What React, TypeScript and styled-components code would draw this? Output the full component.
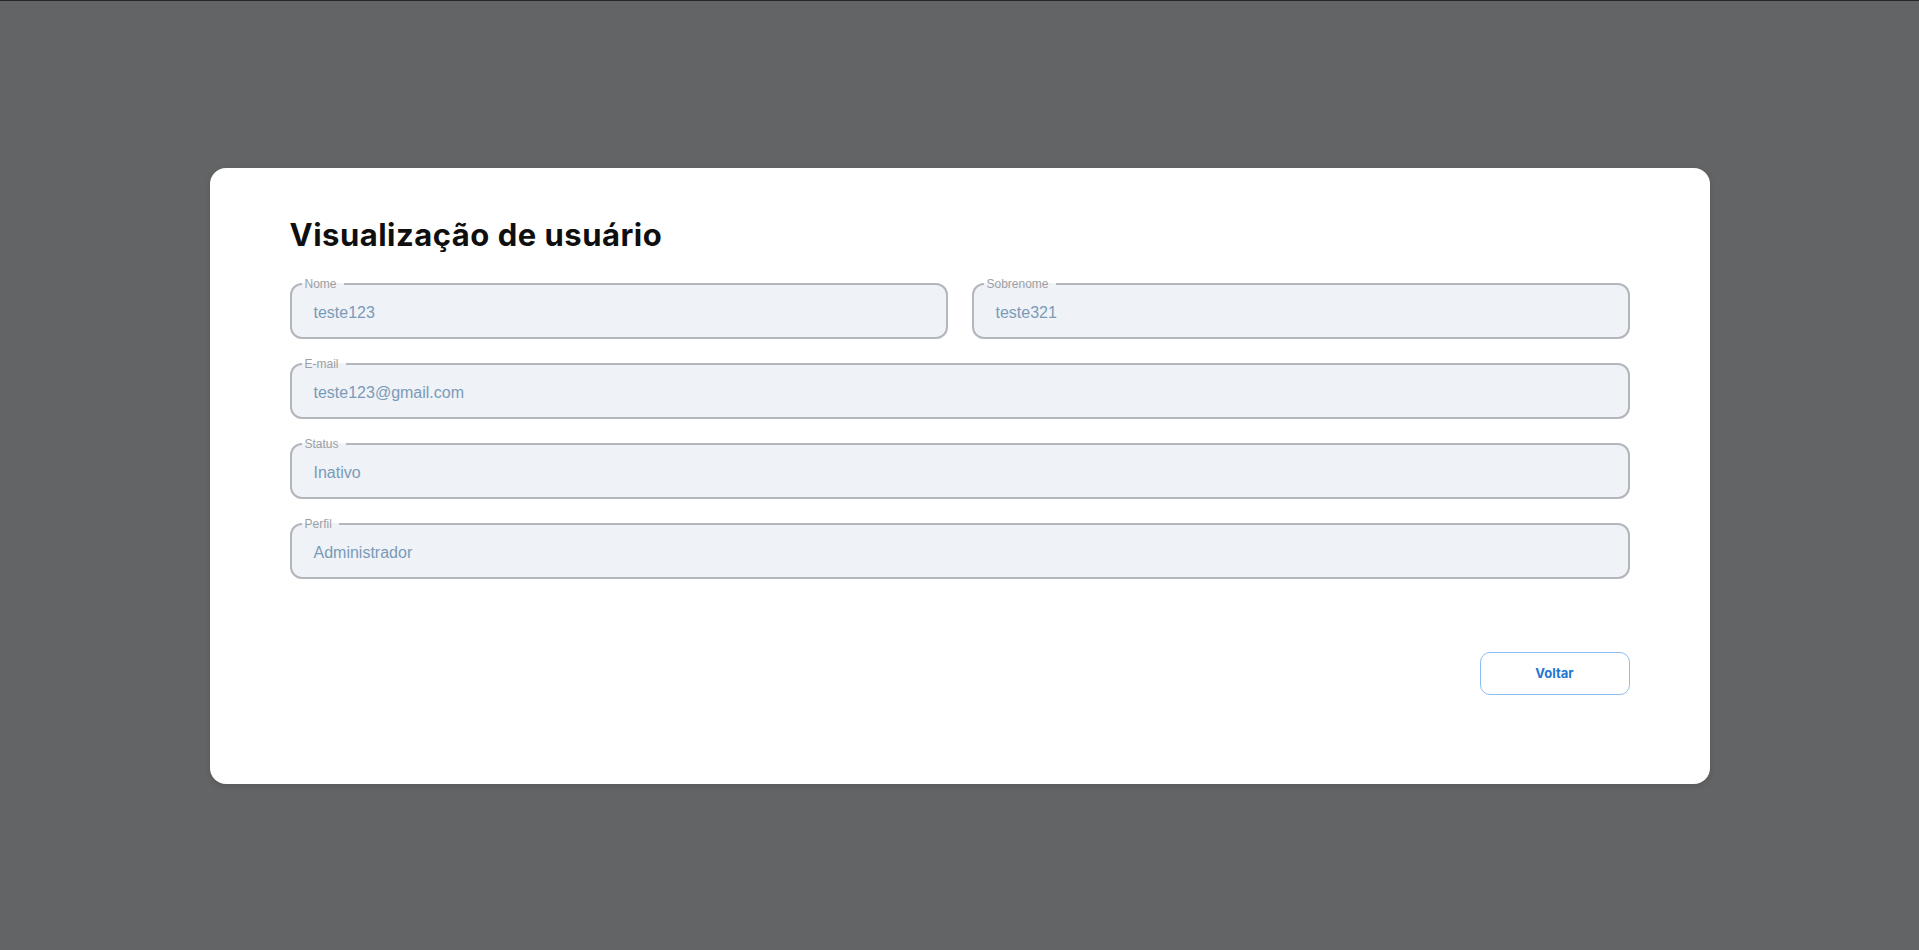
import React from "react";
import styled, { createGlobalStyle } from "styled-components";

const GlobalStyle = createGlobalStyle`
  * { box-sizing: border-box; }
  html, body { margin: 0; padding: 0; }
  body {
    background: #636466;
    font-family: "Liberation Sans", Arial, sans-serif;
  }
`;

const Page = styled.div`
  min-height: 100vh;
  border-top: 1px solid #23272c;
  display: flex;
  align-items: center;
  justify-content: center;
`;

const Card = styled.section`
  width: 1500px;
  background: #ffffff;
  border-radius: 16px;
  padding: 48px 80px 89px;
  box-shadow: 0 2px 6px rgba(0, 0, 0, 0.12);
  display: flex;
  flex-direction: column;
`;

const Title = styled.h1`
  margin: 0 0 25px;
  font-family: Inter, "Liberation Sans", sans-serif;
  font-weight: 700;
  font-size: 31px;
  line-height: 37px;
  color: #0f0f10;
  letter-spacing: 0.5px;
`;

const Form = styled.div`
  display: flex;
  flex-direction: column;
  gap: 19px;
`;

const Row = styled.div<{ $cols: number }>`
  display: grid;
  grid-template-columns: repeat(${(p) => p.$cols}, 1fr);
  gap: 24px;
`;

const FieldBox = styled.fieldset`
  margin: 0;
  min-width: 0;
  height: 61px;
  padding: 0 12px 15px 10px;
  border: 2px solid #b3b6bb;
  border-radius: 12px;
  background: #eff2f7;
`;

const Legend = styled.legend`
  padding: 0 7px 0 3px;
  font-family: "Liberation Sans", Arial, sans-serif;
  font-size: 12px;
  line-height: 12px;
  color: #9d9fa3;
`;

const Value = styled.div`
  padding: 13px 0 0 12px;
  font-family: "Liberation Sans", Arial, sans-serif;
  font-size: 16px;
  line-height: 19px;
  color: #7b9ab7;
  white-space: nowrap;
  overflow: hidden;
`;

const Actions = styled.div`
  margin-top: 73px;
  display: flex;
  justify-content: flex-end;
`;

const Button = styled.button`
  width: 150px;
  height: 43px;
  border: 1px solid #8cbdee;
  border-radius: 10px;
  background: #ffffff;
  color: #1f77d3;
  font-family: Inter, "Liberation Sans", sans-serif;
  font-weight: 700;
  font-size: 13px;
  cursor: pointer;
`;

function Field({ label, value }: { label: string; value: string }) {
  return (
    <FieldBox>
      <Legend>{label}</Legend>
      <Value>{value}</Value>
    </FieldBox>
  );
}

export default function App() {
  return (
    <>
      <GlobalStyle />
      <Page>
        <Card>
          <Title>Visualização de usuário</Title>
          <Form>
            <Row $cols={2}>
              <Field label="Nome" value="teste123" />
              <Field label="Sobrenome" value="teste321" />
            </Row>
            <Row $cols={1}>
              <Field label="E-mail" value="teste123@gmail.com" />
            </Row>
            <Row $cols={1}>
              <Field label="Status" value="Inativo" />
            </Row>
            <Row $cols={1}>
              <Field label="Perfil" value="Administrador" />
            </Row>
          </Form>
          <Actions>
            <Button type="button">Voltar</Button>
          </Actions>
        </Card>
      </Page>
    </>
  );
}
